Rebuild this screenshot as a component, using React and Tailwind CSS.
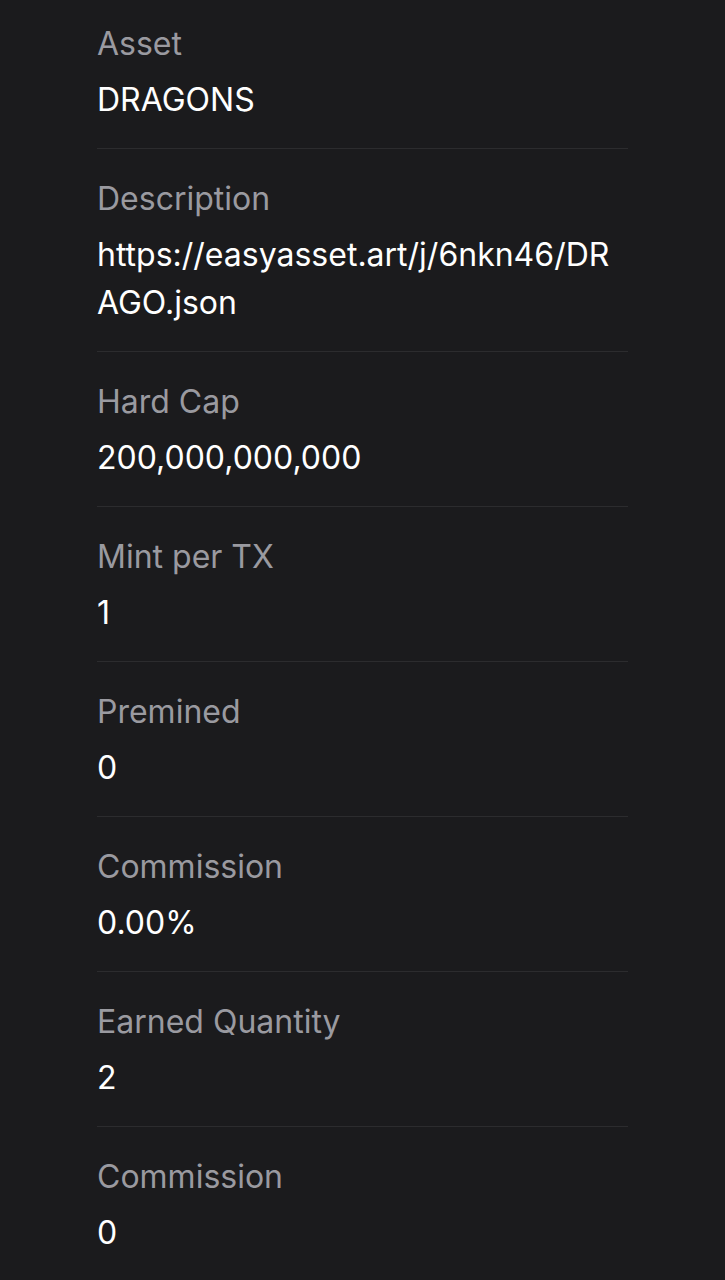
const rows = [
  { label: "Asset", value: "DRAGONS" },
  { label: "Description", value: "https://easyasset.art/j/6nkn46/DRAGO.json" },
  { label: "Hard Cap", value: "200,000,000,000" },
  { label: "Mint per TX", value: "1" },
  { label: "Premined", value: "0" },
  { label: "Commission", value: "0.00%" },
  { label: "Earned Quantity", value: "2" },
  { label: "Commission", value: "0" },
];

export default function App() {
  return (
    <div
      className="min-h-screen overflow-hidden bg-[#1b1b1d] px-[97px]"
      style={{ fontFamily: "Inter, 'Noto Sans', sans-serif" }}
    >
      <div className="-mt-[6px]">
        {rows.map((row, i) => (
          <div
            key={i}
            className={`flex flex-col gap-[8px] pb-6 pt-[26px] ${i < rows.length - 1 ? "border-b border-[#2c2c2e]" : ""}`}
          >
            <p className="text-[32px] leading-[48px] text-[#9a9aa0]">{row.label}</p>
            <p className="break-all text-[32px] leading-[48px] text-white">{row.value}</p>
          </div>
        ))}
      </div>
    </div>
  );
}
